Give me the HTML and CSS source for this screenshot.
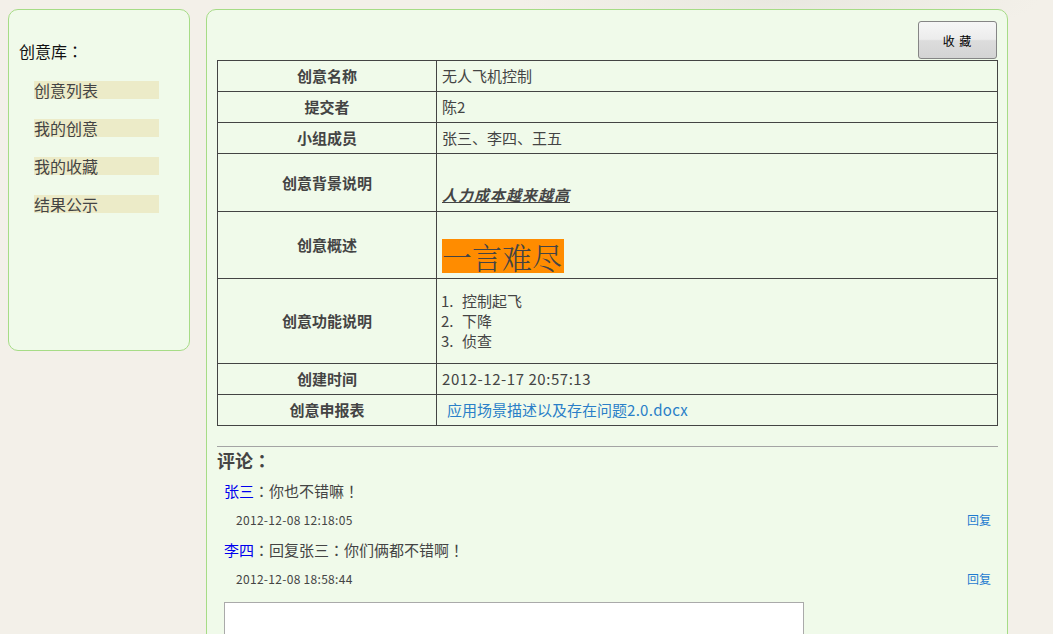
FILE: index.html
```html
<!DOCTYPE html>
<html lang="zh-CN">
<head>
<meta charset="utf-8">
<title>创意详情</title>
<link rel="stylesheet" href="styles.css">
</head>
<body>
<div class="page">
  <aside class="side">
    <h3 class="side-title">创意库<span class="punc" lang="zh-TW">：</span></h3>
    <ul class="nav">
      <li><a class="nav-item" href="#">创意列表</a></li>
      <li><a class="nav-item" href="#">我的创意</a></li>
      <li><a class="nav-item" href="#">我的收藏</a></li>
      <li><a class="nav-item" href="#">结果公示</a></li>
    </ul>
  </aside>
  <main class="main">
    <div class="toolbar"><button class="btn" type="button">收 藏</button></div>
    <table class="info">
      <tr class="r31"><th>创意名称</th><td>无人飞机控制</td></tr>
      <tr class="r31"><th>提交者</th><td>陈2</td></tr>
      <tr class="r31"><th>小组成员</th><td>张三、李四、王五</td></tr>
      <tr class="r58"><th>创意背景说明</th><td class="low"><em class="bg-text">人力成本越来越高</em></td></tr>
      <tr class="r67"><th>创意概述</th><td class="low2"><span class="big">一言难尽</span></td></tr>
      <tr class="r85"><th>创意功能说明</th><td>
        <ol class="funcs">
          <li><span class="num">1.</span>控制起飞</li>
          <li><span class="num">2.</span>下降</li>
          <li><span class="num">3.</span>侦查</li>
        </ol>
      </td></tr>
      <tr class="r31"><th>创建时间</th><td><span class="digits">2012-12-17 20:57:13</span></td></tr>
      <tr class="r31"><th>创意申报表</th><td class="file"><a href="#" class="file-link">应用场景描述以及存在问题<span class="digits-s">2.0.docx</span></a></td></tr>
    </table>
    <hr class="sep">
    <h4 class="c-title">评论<span class="punc" lang="zh-TW">：</span></h4>
    <div class="comment">
      <p class="c-body"><a href="#" class="c-user">张三</a><span class="punc" lang="zh-TW">：</span>你也不错嘛<span class="punc" lang="zh-TW">！</span></p>
      <div class="c-meta"><span class="c-date">2012-12-08 12:18:05</span><a href="#" class="c-reply">回复</a></div>
    </div>
    <div class="comment">
      <p class="c-body"><a href="#" class="c-user">李四</a><span class="punc" lang="zh-TW">：</span>回复张三<span class="punc" lang="zh-TW">：</span>你们俩都不错啊<span class="punc" lang="zh-TW">！</span></p>
      <div class="c-meta"><span class="c-date">2012-12-08 18:58:44</span><a href="#" class="c-reply">回复</a></div>
    </div>
    <textarea class="reply-box"></textarea>
  </main>
</div>
</body>
</html>
```

FILE: styles.css
```css
* { box-sizing: border-box; }
html, body { margin: 0; padding: 0; }
body {
  background: #f3f0e9;
  background-image: radial-gradient(ellipse 260px 40px at 780px 0px, #e9e8e0 0%, rgba(233,232,224,0) 100%);
  background-repeat: no-repeat;
  font-family: "Noto Sans CJK SC", "Noto Sans", sans-serif;
  color: #444;
  overflow: hidden;
  height: 634px;
}
.punc { font-family: "Noto Sans CJK TC", "Noto Sans CJK SC", sans-serif; }
.page {
  display: flex;
  align-items: flex-start;
  gap: 16px;
  padding: 9px 0 0 8px;
}
.side {
  width: 182px;
  height: 342px;
  background: #f0faea;
  border: 1px solid #a6dc86;
  border-radius: 10px;
  padding: 30px 0 0 10px;
}
.side-title {
  margin: 0;
  font-size: 16px;
  font-weight: normal;
  line-height: 22px;
  color: #111;
}
.nav {
  list-style: none;
  margin: 19px 0 0 15px;
  padding: 0;
}
.nav li { margin-bottom: 20px; }
.nav-item {
  display: block;
  width: 125px;
  height: 18px;
  line-height: 18px;
  background: #ecebc8;
  color: #444;
  font-size: 16px;
  text-decoration: none;
}
.main {
  width: 802px;
  height: 700px;
  background: #f0faea;
  border: 1px solid #a6dc86;
  border-radius: 10px;
  padding: 11px 9px 0 10px;
}
.toolbar {
  display: flex;
  justify-content: flex-end;
  padding-right: 1px;
  margin-bottom: 1px;
}
.btn {
  width: 79px;
  height: 38px;
  border: 1px solid #858585;
  border-radius: 3px;
  background: linear-gradient(to bottom, #f6f6f6 0%, #ececec 48%, #dcdcdc 52%, #d4d4d4 100%);
  font-family: "Noto Sans CJK SC", sans-serif;
  font-size: 12px;
  font-weight: normal;
  color: #000;
  padding: 0;
  letter-spacing: 1px;
}
.info {
  width: 781px;
  border-collapse: collapse;
  border: 1px solid #444;
  font-size: 15px;
  color: #444;
}
.info th, .info td {
  border: 1px solid #444;
  padding: 0 5px;
  line-height: 20px;
}
.info th {
  width: 219px;
  font-weight: bold;
  text-align: center;
}
.info td { text-align: left; }
.r31 { height: 31px; }
.r58 { height: 58px; }
.r67 { height: 67px; }
.r85 { height: 85px; }
.low { vertical-align: bottom; padding-bottom: 6px !important; }
.low2 { vertical-align: bottom; padding-bottom: 5px !important; }
.bg-text {
  font-style: italic;
  font-weight: bold;
  text-decoration: underline;
  letter-spacing: 1px;
}
.big {
  display: inline-block;
  background: #ff8c00;
  font-family: "Noto Serif CJK SC", "Noto Sans CJK SC", serif;
  font-size: 30px;
  line-height: 34px;
  height: 34px;
  padding: 0 2px 0 0;
  color: #444;
  font-weight: 300;
}
.funcs {
  list-style: none;
  margin: 0;
  padding: 0;
}
.num {
  display: inline-block;
  width: 21px;
  margin-left: -1px;
}
.digits { letter-spacing: 0.55px; }
.digits-s { letter-spacing: 0.3px; }
.file { padding-left: 10px !important; }
.file-link { color: #2a7fc8; text-decoration: none; }
.sep {
  border: 0;
  border-top: 1px solid #a4a4a4;
  margin: 20px 0 0 0;
  width: 781px;
}
.c-title {
  margin: 0;
  font-size: 18px;
  font-weight: bold;
  line-height: 26px;
  color: #444;
}
.comment { padding-left: 7px; width: 774px; }
.comment + .comment { margin-top: 11px; }
.c-body {
  margin: 7px 0 0 0;
  font-size: 15px;
  line-height: 22px;
}
.c-user { color: #0000ee; text-decoration: none; }
.c-meta {
  display: flex;
  justify-content: space-between;
  align-items: center;
  padding: 0 0 0 12px;
  margin-top: 10px;
  font-size: 12px;
  line-height: 16px;
}
.c-date { color: #444; letter-spacing: 0.3px; }
.c-reply { color: #1f7bd0; text-decoration: none; }
.reply-box {
  display: block;
  margin: 15px 0 0 7px;
  width: 580px;
  height: 100px;
  border: 1px solid #aaa;
  background: #fff;
  resize: none;
}
```
